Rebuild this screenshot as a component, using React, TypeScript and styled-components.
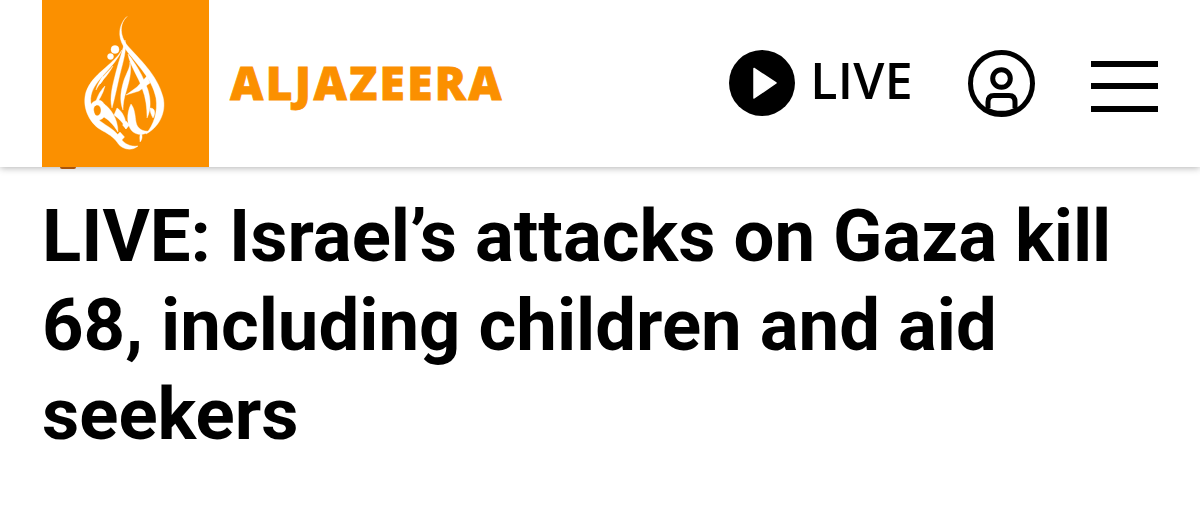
import React from 'react';
import styled, { createGlobalStyle } from 'styled-components';

const GlobalStyle=createGlobalStyle`
    html,body{
        margin:0;
        padding:0;
        background:#fff;
    }
`
const Page=styled.div`
    width:1200px;
    height:513px;
    overflow:hidden;
    background:#fff;
`
const Header=styled.header`
    height:167px;
    padding:0 42px;
    display:flex;
    align-items:center;
    background:#fff;
    box-shadow:0 1px 7px rgba(0,0,0,0.3);
    position:relative;
`
const LogoBlock=styled.div`
    width:167px;
    height:167px;
    flex:none;
    background:#fb9000;
    position:relative;
`
const LogoMark=styled.svg`
    display:block;
    width:167px;
    height:167px;
`
const PeekMark=styled.span`
    position:absolute;
    left:18px;
    bottom:-2px;
    width:16px;
    height:2px;
    border-radius:0 0 8px 8px;
    background:#a8540c;
`
const Wordmark=styled.div`
    margin-left:21px;
    margin-bottom:3px;
    font-family:"Open Sans",sans-serif;
    font-weight:800;
    font-size:46px;
    line-height:1;
    letter-spacing:2.35px;
    -webkit-text-stroke:0.8px #fb9000;
    color:#fb9000;
`
const Actions=styled.div`
    margin-left:auto;
    display:flex;
    align-items:center;
`
const LiveButton=styled.div`
    display:flex;
    align-items:center;
    gap:15px;
    color:#000;
`
const LiveLabel=styled.span`
    margin-bottom:7px;
    font-family:"Open Sans",sans-serif;
    font-weight:600;
    font-size:50px;
    line-height:1;
    letter-spacing:0.3px;
`
const IconSvg=styled.svg<{$gap?:number;$top?:number}>`
    display:block;
    flex:none;
    margin-left:${p=>p.$gap ?? 0}px;
    margin-top:${p=>p.$top ?? 0}px;
`
const Headline=styled.h1`
    margin:0;
    padding:25px 42px 0 42px;
    font-family:Roboto,sans-serif;
    font-weight:700;
    font-size:72.5px;
    line-height:89px;
    color:#000;
`

function AlJazeeraLogo() {
    return (
        <LogoMark viewBox="42 0 167 167" fill="#fff" stroke="#fff" strokeWidth="0.4" strokeLinejoin="round">
            <path d="M127 16.5C119 24 120 36 127 45C139 59 157 74 163 97C167 113 158 128 146 134C154 124 158 112 156 98C152 77 134 62 124 47C117 36 119 24 127 16.5Z"/>
            <path d="M125 40C127 50 123 62 120 74C117 87 115 97 112 108C109 97 113 84 116 72C119 60 123 50 125 40Z"/>
            <path d="M128 54C136 64 143 76 148 90C151 100 151 110 147 118C147 108 146 98 142 88C138 76 130 66 128 54Z"/>
            <path d="M130 62C132 72 129 82 126 92C124 98 123 104 123 110C119 100 121 90 124 80C127 72 130 68 130 62Z"/>
            <path d="M122 50C112 66 92 74 86 92C82 106 88 120 98 128C104 132 112 135 117 142C121 149 131 152 138 146C129 147 123 143 119 136C113 128 104 125 98 119C91 111 89 100 92 92C97 78 114 68 122 50Z"/>
            <path d="M113 66C106 74 98 80 96 90C100 82 108 76 113 66Z"/>
            <circle cx="115" cy="49.5" r="4"/>
            <circle cx="110.5" cy="56.5" r="3"/>
            <path d="M105 86C99 92 96 99 95 106C99 100 103 94 105 86Z"/>
            <path fillRule="evenodd" d="M98 100C91 101 88 108 90 115C92 121 100 122 104 117C108 111 105 100 98 100ZM97 105C101 105 102 111 100 114C98 117 94 116 94 112C93 109 94 105 97 105Z"/>
            <path d="M104 104C110 108 118 118 118 132C113 124 108 119 102 116Z"/>
            <path d="M131 104C126 114 127 126 132 131C137 136 145 135 150 131C142 132 137 128 136 122C135 116 135 109 131 104Z"/>
            <path d="M117 108C122 111 127 119 126 129C123 122 118 118 114 115Z"/>
            <path d="M147 76L137 87L126 95L139 91L150 83Z"/>
            <path d="M120 132L124.5 137L120 142L115.5 137Z"/>
            <path d="M126 121L129.5 125L126 129L122.5 125Z"/>
            <path d="M141 133C143 136 142 140 140 142C140 139 139 136 141 133Z"/>
            <path d="M103 76C101 78 100 81 100 84C102 82 104 79 103 76Z"/>
            <path d="M150 108C155 108 156 113 153 118C151 115 150 111 150 108Z"/>
        </LogoMark>
    );
}

function PlayIcon() {
    return (
        <IconSvg $top={-1} width="66" height="66" viewBox="0 0 66 66">
            <circle cx="33" cy="33" r="33" fill="#000"/>
            <path d="M25 18.5L47 33L25 48Z" fill="#fff" stroke="#fff" strokeWidth="1.5" strokeLinejoin="round"/>
        </IconSvg>
    );
}

function UserIcon() {
    return (
        <IconSvg $gap={55} width="67" height="67" viewBox="0 0 67 67" fill="none" stroke="#000" strokeWidth="5">
            <circle cx="33.5" cy="33.5" r="31"/>
            <circle cx="33.5" cy="28.5" r="8.8"/>
            <path d="M20 58V52C20 48 22 45.5 26 45.5H41C45 45.5 47 48 47 52V58"/>
            <path d="M19 58C27 63 40 63 48 58" strokeWidth="2"/>
        </IconSvg>
    );
}

function MenuIcon() {
    return (
        <IconSvg $gap={56} $top={6} width="67" height="51" viewBox="0 0 67 51" fill="#000" stroke="none">
            <rect x="0" y="0" width="67" height="6"/>
            <rect x="0" y="22" width="67" height="6"/>
            <rect x="0" y="45" width="67" height="6"/>
        </IconSvg>
    );
}

export default function App() {
    return (
        <Page>
            <GlobalStyle/>
            <Header>
                <LogoBlock>
                    <AlJazeeraLogo/>
                    <PeekMark/>
                </LogoBlock>
                <Wordmark>ALJAZEERA</Wordmark>
                <Actions>
                    <LiveButton>
                        <PlayIcon/>
                        <LiveLabel>LIVE</LiveLabel>
                    </LiveButton>
                    <UserIcon/>
                    <MenuIcon/>
                </Actions>
            </Header>
            <Headline>LIVE: Israel’s attacks on Gaza kill 68, including children and aid seekers</Headline>
        </Page>
    );
}
